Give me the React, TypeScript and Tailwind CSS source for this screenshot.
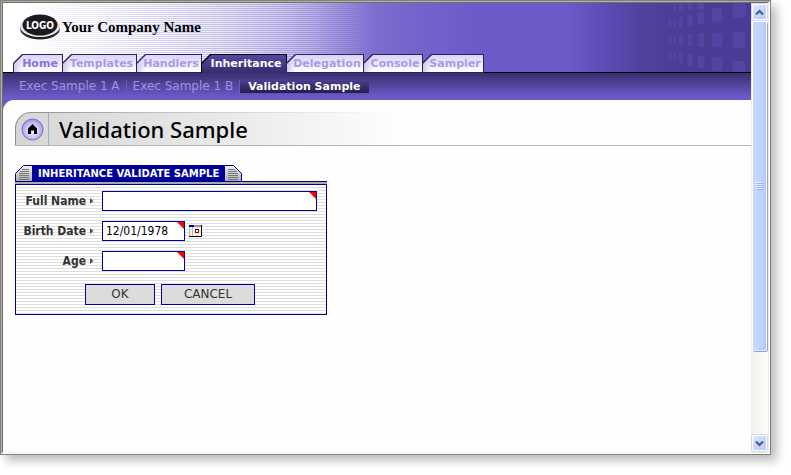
import React, { useState } from "react";
import clsx from "clsx";

const sans = "font-['DejaVu_Sans',Verdana,sans-serif]";
const condensed = "font-['DejaVu_Sans_Condensed','DejaVu_Sans',Tahoma,sans-serif]";

const tabs = [
  { name: "Home", width: "w-[50px]", tone: "text-[#8c72dc]" },
  { name: "Templates", width: "w-[75px]", tone: "text-[#a99be8]" },
  { name: "Handlers", width: "w-[66px]", tone: "text-[#a99be8]" },
  { name: "Inheritance", width: "w-[86px]", tone: "text-white", active: true },
  { name: "Delegation", width: "w-[78px]", tone: "text-[#a99be8]" },
  { name: "Console", width: "w-[60px]", tone: "text-[#a99be8]" },
  { name: "Sampler", width: "w-[62px]", tone: "text-[#a99be8]" },
];

const dotColumns = [
  { x: 2, w: 2, ys: [20, 37, 53], h: 9 },
  { x: 7, w: 3, ys: [3, 20, 37, 54], h: 10 },
  { x: 13, w: 4, ys: [2, 19, 37, 55], h: 11 },
  { x: 22, w: 5, ys: [1, 18, 37, 57], h: 12 },
  { x: 33, w: 7, ys: [0, 15, 37, 59], h: 13 },
  { x: 49, w: 10, ys: [12, 37, 61], h: 14 },
  { x: 71, w: 13, ys: [7, 37, 66], h: 16 },
];

function Dots() {
  return (
    <svg className="absolute top-0 right-0" width="83" height="69" aria-hidden="true">
      {dotColumns.map((c) =>
        c.ys.map((y) => (
          <rect key={`${c.x}-${y}`} x={c.x - c.w / 2} y={y - c.h / 2} width={c.w} height={c.h} rx={c.w / 4} fill="#5a4bae" opacity="0.6" />
        ))
      )}
    </svg>
  );
}

function Logo() {
  return (
    <svg width="42" height="26" viewBox="0 0 42 26" aria-hidden="true">
      <ellipse cx="21" cy="14.500" rx="20" ry="11" fill="#222" />
      <ellipse cx="21" cy="12.500" rx="20" ry="10.500" fill="#e4e4e4" />
      <ellipse cx="21" cy="11" rx="17.500" ry="10.500" fill="#1c1a1c" />
      <text x="21" y="15" textAnchor="middle" fontFamily="'DejaVu Sans Condensed','Liberation Sans',sans-serif" fontWeight="bold" fontSize="10" fill="#fff">
        LOGO
      </text>
    </svg>
  );
}

function Header() {
  return (
    <header>
      <div className="relative flex h-[70px] flex-col justify-between border-b border-black bg-[linear-gradient(90deg,#6b5bc9_565px,#5d4db7_600px,#4f419d_640px,#4a3c94_690px)]">
        <div className="absolute inset-0 bg-[linear-gradient(90deg,#fff_20px,#ffffffc8_120px,#ffffff90_230px,#ffffff58_310px,#ffffff20_370px,#ffffff12_400px,#ffffff00_475px)]" />
        <div className="absolute inset-0 bg-[repeating-linear-gradient(180deg,#fff_0px,#fff_1px,transparent_1px,transparent_2px)] [mask-image:linear-gradient(90deg,#000_30px,#000c_180px,#0007_280px,#0002_340px,transparent_370px)]" />
        <Dots />
        <div className="relative flex items-center gap-px pt-[11px] pl-4">
          <Logo />
          <span className="font-['Liberation_Serif',serif] text-[15px] leading-[22px] font-bold text-black">Your Company Name</span>
        </div>
        <nav className={clsx("relative -mb-px flex pl-[10px]", sans)} aria-label="Main">
          {tabs.map((t) => (
            <a
              key={t.name}
              href="#"
              className={clsx(
                "-mr-px block h-[19px] pt-px text-[11px] leading-[18px] font-bold whitespace-nowrap [clip-path:polygon(9px_0,100%_0,100%_100%,0_100%,0_9px)]",
                t.width,
                t.active ? "bg-black" : "bg-[#2b2062] pb-px",
                t.tone
              )}
            >
              <span
                className={clsx(
                  "mx-px flex h-full justify-center pl-[4px] [clip-path:polygon(9px_0,100%_0,100%_100%,0_100%,0_9px)]",
                  t.active
                    ? "bg-[linear-gradient(#5548a6,#352b6b)]"
                    : "bg-[linear-gradient(90deg,#b9b0dd99,transparent_8px),linear-gradient(#d9d4f6,#fff)]"
                )}
              >
                {t.name}
              </span>
            </a>
          ))}
        </nav>
      </div>
      <nav className={clsx("flex h-[27px] items-center bg-[linear-gradient(#392f70,#6b5bc9_90%)] pl-4 text-[12px] leading-[13px] whitespace-nowrap text-[#a391e0]", sans)} aria-label="Inheritance">
        <a href="#">Exec Sample 1 A</a>
        <span className="mx-[6px] h-[13px] w-px bg-[#6b5bc9]" />
        <a href="#">Exec Sample 1 B</a>
        <a href="#" className="ml-[6px] border-l border-[#6b5bc9] bg-[linear-gradient(#4b3f93,#241d4c)] px-[8px] text-[11px] font-bold text-white">
          Validation Sample
        </a>
      </nav>
    </header>
  );
}

function PageTitle() {
  return (
    <div className="ml-3 flex h-[34px] items-stretch border-b border-[#b5b5bb]">
      <div className="flex w-[385px] rounded-tl-[16px] bg-[linear-gradient(90deg,#8c8c8c,#b8b8b8_120px,#fff)] pt-px pl-px">
        <div className="flex flex-1 rounded-tl-[15px] bg-[linear-gradient(90deg,#d6d6d6,#e6e6e6_180px,#fefefe)]">
          <a href="#" aria-label="Home" className="flex w-[33px] items-center justify-center border-r border-[#a9a9b8] pl-px">
            <svg width="23" height="23" viewBox="0 0 23 23" aria-hidden="true">
              <defs>
                <radialGradient id="orb" cx="0.5" cy="0.55" r="0.55">
                  <stop offset="0" stopColor="#f0eeff" />
                  <stop offset="0.5" stopColor="#d5cefa" />
                  <stop offset="1" stopColor="#a091e4" />
                </radialGradient>
              </defs>
              <circle cx="11.500" cy="11.500" r="10.500" fill="url(#orb)" stroke="#7b6dbb" />
              <path d="M11.500 6L16 10.500V16H13V12.500H10V16H7V10.500Z" fill="#000" />
            </svg>
          </a>
          <h1 className="pl-[10px] font-['Noto_Sans',sans-serif] text-[22px] leading-[32px] font-medium whitespace-nowrap text-black">Validation Sample</h1>
        </div>
      </div>
    </div>
  );
}

function Grip({ flip }: { flip?: boolean }) {
  return (
    <svg width="17" height="17" viewBox="0 0 17 17" className={clsx("shrink-0", flip && "-scale-x-100")} aria-hidden="true">
      <defs>
        <linearGradient id="grip" x1="0" x2="0" y1="0" y2="1">
          <stop offset="0" stopColor="#f5f5f5" />
          <stop offset="1" stopColor="#a9a9a9" />
        </linearGradient>
      </defs>
      <path d="M0.500 17V8.500L8.500 0.500H17V17Z" fill="url(#grip)" />
      <path d="M0.500 17V8.500L8.500 0.500H17" fill="none" stroke="#000099" />
      <path d="M7 4.500H14M5 6.500H14M4 8.500H14M4 10.500H14M4 12.500H14M4 14.500H14" stroke="#777" />
    </svg>
  );
}

function Field({ id, label, size, value }: { id: string; label: string; size: string; value?: string }) {
  const [text, setText] = useState(value ?? "");
  return (
    <div className="flex h-[20px] items-center">
      <label htmlFor={id} className={clsx("w-[70px] text-right text-[12px] leading-5 font-bold whitespace-nowrap text-[#333]", condensed)}>
        {label}
      </label>
      <svg width="4" height="6" className="mr-[8px] ml-1" aria-hidden="true">
        <path d="M0 0L3.500 3L0 6Z" fill="#555" />
      </svg>
      <span className="relative flex">
        <input
          id={id}
          value={text}
          onChange={(e) => setText(e.target.value)}
          className={clsx("h-[20px] border border-[#000099] bg-white px-[3px] text-[12px] text-black outline-none", condensed, size)}
        />
        <span className="pointer-events-none absolute top-px right-px size-[7px] bg-[#f00] [clip-path:polygon(0_0,100%_0,100%_100%)]" />
      </span>
      {value && (
        <button type="button" aria-label="Pick a date" className="ml-1">
          <svg width="13" height="12" viewBox="0 0 13 12" aria-hidden="true">
            <path d="M0 0H12V11H0Z" fill="#f2f2f2" />
            <path d="M0.500 2V11M3.500 2V11" stroke="#b8b8b8" />
            <path d="M5 1H12" stroke="#999" strokeWidth="2" />
            <path d="M0 0H5V2H0Z" fill="#000099" />
            <path d="M12.500 0V11.500H0" fill="none" stroke="#000" />
            <rect x="6.500" y="4.500" width="3" height="3" fill="#fff" stroke="#990000" />
          </svg>
        </button>
      )}
    </div>
  );
}

function FormPanel() {
  const button = clsx("h-[21px] border border-[#000099] bg-[#dcdcdc] text-[12px] leading-[19px] text-[#333]", sans);
  return (
    <section className="mt-[19px] ml-3 w-[312px]">
      <div className="flex h-[16px] overflow-hidden">
        <Grip />
        <h2 className={clsx("bg-[#000099] px-[6px] text-[10px] leading-[17px] font-bold whitespace-nowrap text-white", sans)}>
          INHERITANCE VALIDATE SAMPLE
        </h2>
        <Grip flip />
      </div>
      <div className="h-1 border-y border-[#000099] bg-[#a9a9a9]" />
      <form
        onSubmit={(e) => e.preventDefault()}
        className="flex flex-col gap-[10px] border border-t-0 border-[#000099] bg-[repeating-linear-gradient(180deg,#fff_0px,#fff_2px,#dedede_2px,#dedede_3px)] pt-[6px] pb-[9px]"
      >
        <Field id="full-name" label="Full Name" size="w-[215px]" />
        <Field id="birth-date" label="Birth Date" size="w-[83px]" value="12/01/1978" />
        <Field id="age" label="Age" size="w-[83px]" />
        <div className="mt-[3px] flex gap-[6px] pl-[69px]">
          <button type="submit" className={clsx(button, "w-[70px]")}>OK</button>
          <button type="button" className={clsx(button, "w-[94px]")}>CANCEL</button>
        </div>
      </form>
    </section>
  );
}

function Arrow({ down }: { down?: boolean }) {
  return (
    <button type="button" aria-label={down ? "Scroll down" : "Scroll up"} className="flex h-[16px] w-[15px] items-center justify-center rounded-[2px] border border-white bg-[linear-gradient(135deg,#dce7ff,#b4c8f8)] shadow-[0_0_0_1px_#c9d6f2]">
      <svg width="9" height="7" viewBox="0 0 9 7" className={clsx(down && "rotate-180")} aria-hidden="true">
        <path d="M1 5.500L4.500 2L8 5.500" fill="none" stroke="#4d6185" strokeWidth="2.200" />
      </svg>
    </button>
  );
}

function ScrollBar() {
  return (
    <div className="flex w-[17px] shrink-0 flex-col items-start gap-px bg-[linear-gradient(90deg,#eeebe0_1px,#f3f1ea_1px,#fefefb)] py-px pl-px">
      <Arrow />
      <div className="flex w-full flex-1 flex-col items-start">
        <div className="flex h-[80%] w-[15px] items-center justify-center rounded-[2px] border border-white border-b-[#dce6ff] bg-[linear-gradient(90deg,#c9d8fc,#c2d2fd_60%,#b5c8f7)] shadow-[1px_1px_0_#8fa9dc]">
          <svg width="7" height="8" aria-hidden="true">
            <path d="M0 0.500H6M0 2.500H6M0 4.500H6M0 6.500H6" stroke="#eef4ff" />
            <path d="M1 1.500H7M1 3.500H7M1 5.500H7M1 7.500H7" stroke="#8cb0f8" />
          </svg>
        </div>
      </div>
      <Arrow down />
    </div>
  );
}

export default function App() {
  return (
    <div className="h-screen min-h-[360px] bg-white pr-5 pb-5">
      <div className="h-full border border-[#808080] shadow-[6px_6px_9px_#00000040]">
        <div className="h-full border border-t-[#b4b1a6] border-r-white border-b-white border-l-[#b4b1a6]">
          <div className="flex h-full border border-t-[#716f64] border-r-[#f1efe2] border-b-[#f1efe2] border-l-[#716f64]">
            <div className="flex min-w-0 flex-1 flex-col overflow-hidden bg-[#6b5bc9]">
              <Header />
              <main className="flex-1 rounded-tl-[11px] bg-[#fefefe] pt-3">
                <PageTitle />
                <FormPanel />
              </main>
            </div>
            <ScrollBar />
          </div>
        </div>
      </div>
    </div>
  );
}
